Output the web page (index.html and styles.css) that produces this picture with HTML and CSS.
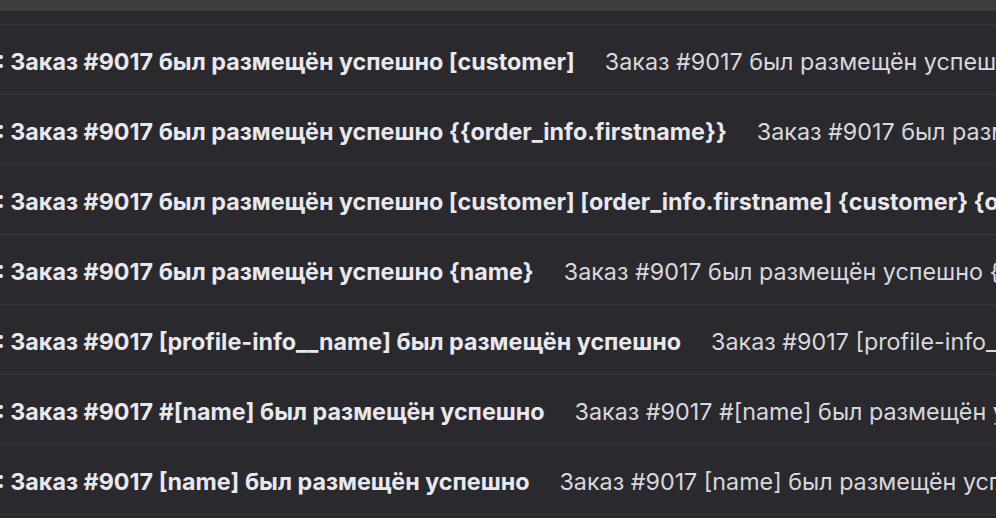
FILE: index.html
```html
<!DOCTYPE html>
<html lang="ru">

<head>
    <meta charset="UTF-8">
    <meta name="viewport" content="width=device-width, initial-scale=1.0">
    <title>Шаблоны уведомлений</title>
    <link rel="stylesheet" href="styles.css">
</head>

<body>
    <div class="topbar"></div>

    <div class="list">
        <div class="row row-cut"></div>
        <div class="row">
            <span class="subject">: Заказ #9017 был размещён успешно [customer]</span>
            <span class="preview">Заказ #9017 был размещён успешно [customer]</span>
        </div>
        <div class="row">
            <span class="subject">: Заказ #9017 был размещён успешно {{order_info.firstname}}</span>
            <span class="preview">Заказ #9017 был размещён успешно {{order_info.firstname}}</span>
        </div>
        <div class="row">
            <span class="subject">: Заказ #9017 был размещён успешно [customer] [order_info.firstname] {customer} {order_info.firstname}</span>
            <span class="preview">Заказ #9017 был размещён успешно</span>
        </div>
        <div class="row">
            <span class="subject">: Заказ #9017 был размещён успешно {name}</span>
            <span class="preview">Заказ #9017 был размещён успешно {name}</span>
        </div>
        <div class="row">
            <span class="subject">: Заказ #9017 [profile-info__name] был размещён успешно</span>
            <span class="preview">Заказ #9017 [profile-info__name] был размещён успешно</span>
        </div>
        <div class="row">
            <span class="subject">: Заказ #9017 #[name] был размещён успешно</span>
            <span class="preview">Заказ #9017 #[name] был размещён успешно</span>
        </div>
        <div class="row">
            <span class="subject">: Заказ #9017 [name] был размещён успешно</span>
            <span class="preview">Заказ #9017 [name] был размещён успешно</span>
        </div>
    </div>
</body>

</html>
```

FILE: styles.css
```css
body,
html {
    margin: 0;
}

body {
    background-color: #2a292e;
    font-family: 'Inter', sans-serif;
    overflow: hidden;
}

.topbar {
    height: 11px;
    background-color: #3d3d3f;
}

.list {
    overflow: hidden;
}

.row {
    display: flex;
    align-items: center;
    gap: 30px;
    padding-top: 3px;
    box-sizing: border-box;
    height: 70px;
    border-bottom: 1px solid #37363b;
    white-space: nowrap;
    margin-left: -3px;
    font-size: 23.3px;
}

.row-cut {
    height: 14px;
    padding-top: 0;
}

.subject {
    font-weight: 700;
    color: #e9e8ee;
}

.preview {
    font-weight: 400;
    color: #d9d8de;
}
```
